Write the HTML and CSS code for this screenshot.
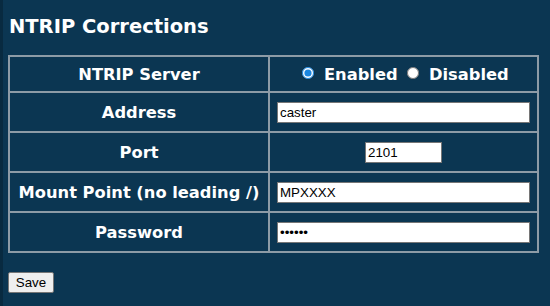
FILE: index.html
```html
<!DOCTYPE html>
<html>
<head>
	<title>NTRIP Corrections</title>
	<link rel="stylesheet" href="styles.css">
</head>
<body>
<div class="page">
	<h2>NTRIP Corrections</h2>
	<form>
		<table class="settings">
			<tr class="first">
				<th>NTRIP Server</th>
				<td>
					<label><input type="radio" name="ntrip" checked> Enabled</label>
					<label><input type="radio" name="ntrip"> Disabled</label>
				</td>
			</tr>
			<tr>
				<th>Address</th>
				<td><input class="wide" type="text" value="caster"></td>
			</tr>
			<tr>
				<th>Port</th>
				<td><input class="port" type="text" value="2101"></td>
			</tr>
			<tr>
				<th>Mount Point (no leading /)</th>
				<td><input class="wide" type="text" value="MPXXXX"></td>
			</tr>
			<tr>
				<th>Password</th>
				<td><input class="wide" type="password" value="secret"></td>
			</tr>
		</table>
		<div class="actions">
			<button type="button">Save</button>
		</div>
	</form>
</div>
</body>
</html>
```

FILE: styles.css
```css
* {
	margin: 0px;
	padding: 0px;
	box-sizing: border-box;
}
body {
	background: #0b3652;
	color: #fff;
	font-family: "DejaVu Sans", Verdana, sans-serif;
}
.page {
	border-left: 3px solid #082a40;
	min-height: 306px;
	padding: 15px 0 0 5px;
}
h2 {
	font-size: 19.5px;
	font-weight: bold;
	margin-left: 1px;
	line-height: 24px;
}
.settings {
	margin-top: 16px;
	width: 531px;
	border: 1px solid #8d9ba6;
	border-spacing: 0;
}
.settings th,
.settings td {
	border: 1px solid #8d9ba6;
	height: 40px;
	text-align: center;
	font-size: 16.3px;
	font-weight: bold;
}
.settings th {
	width: 260px;
}
.settings tr.first th,
.settings tr.first td {
	height: 36px;
}
.settings td label {
	white-space: nowrap;
}
.settings input[type=radio] {
	width: 12px;
	height: 12px;
	margin: 0 4px 0 4px;
	vertical-align: 1px;
	accent-color: #1a86e0;
}
.settings input[type=text],
.settings input[type=password] {
	font-family: "Liberation Sans", Arial, sans-serif;
	font-size: 13.33px;
	font-weight: normal;
	height: 21px;
	border: 1px solid #767676;
	padding: 1px 2px;
	color: #000;
	background: #fff;
}
.settings .wide {
	width: 253px;
}
.settings .port {
	width: 77px;
}
.actions {
	margin-top: 19px;
}
button {
	font-family: "Liberation Sans", Arial, sans-serif;
	font-size: 13.33px;
	width: 46px;
	height: 21px;
	background: #efefef;
	border: 1px solid #767676;
	border-radius: 2px;
	color: #000;
}
```
